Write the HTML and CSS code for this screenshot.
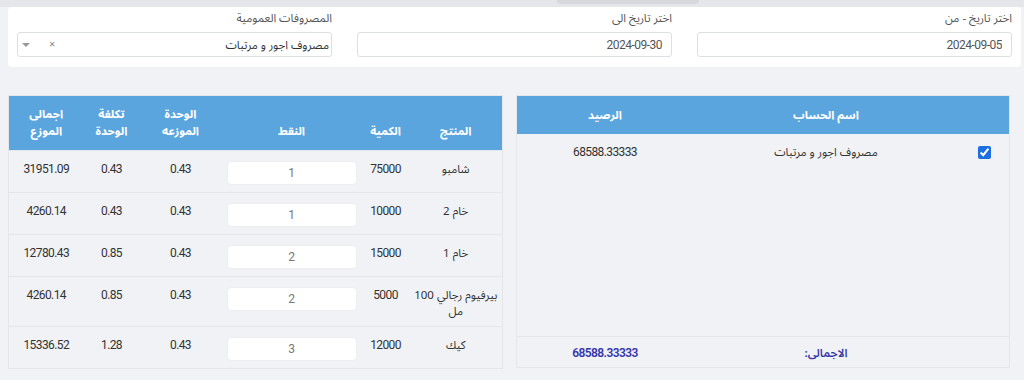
FILE: index.html
```html
<!DOCTYPE html>
<html dir="rtl" lang="ar">
<head>
  <meta charset="utf-8">
  <title>توزيع المصروفات</title>
  <link rel="stylesheet" href="styles.css">
</head>
<body>
  <div class="topbar"><span class="topbar-tab"></span></div>

  <div class="filter-card">
    <div class="field">
      <label>اختر تاريخ - من</label>
      <input type="text" class="text-input" value="2024-09-05">
    </div>
    <div class="field">
      <label>اختر تاريخ الى</label>
      <input type="text" class="text-input" value="2024-09-30">
    </div>
    <div class="field">
      <label>المصروفات العمومية</label>
      <div class="select-box">
        <span class="select-value">مصروف اجور و مرتبات</span>
        <span class="select-clear">×</span>
        <span class="select-arrow"></span>
      </div>
    </div>
  </div>

  <div class="tables">
    <!-- accounts -->
    <div class="accounts">
      <table class="grid-table">
        <colgroup><col class="c-check"><col class="c-name"><col></colgroup>
        <thead>
          <tr><th></th><th>اسم الحساب</th><th>الرصيد</th></tr>
        </thead>
        <tbody>
          <tr>
            <td><input type="checkbox" class="check" checked></td>
            <td>مصروف اجور و مرتبات</td>
            <td class="num">68588.33333</td>
          </tr>
        </tbody>
      </table>
      <div class="accounts-footer">
        <span class="footer-spacer"></span>
        <span class="footer-label">الاجمالى:</span>
        <span class="footer-value num">68588.33333</span>
      </div>
    </div>

    <!-- products -->
    <table class="grid-table products">
      <colgroup>
        <col style="width:93px"><col style="width:48px"><col style="width:140px">
        <col style="width:82px"><col style="width:56px"><col style="width:75px">
      </colgroup>
      <thead>
        <tr>
          <th>المنتج</th>
          <th>الكمية</th>
          <th>النقط</th>
          <th><span class="th-line">الوحدة</span><span class="th-line">الموزعه</span></th>
          <th><span class="th-line">تكلفة</span><span class="th-line">الوحدة</span></th>
          <th><span class="th-line">اجمالى</span><span class="th-line">الموزع</span></th>
        </tr>
      </thead>
      <tbody>
        <tr>
          <td>شامبو</td><td class="num">75000</td>
          <td><input type="text" class="points-input" value="1"></td>
          <td class="num">0.43</td><td class="num">0.43</td><td class="num">31951.09</td>
        </tr>
        <tr>
          <td>خام 2</td><td class="num">10000</td>
          <td><input type="text" class="points-input" value="1"></td>
          <td class="num">0.43</td><td class="num">0.43</td><td class="num">4260.14</td>
        </tr>
        <tr>
          <td>خام 1</td><td class="num">15000</td>
          <td><input type="text" class="points-input" value="2"></td>
          <td class="num">0.43</td><td class="num">0.85</td><td class="num">12780.43</td>
        </tr>
        <tr>
          <td>بيرفيوم رجالي 100 مل</td><td class="num">5000</td>
          <td><input type="text" class="points-input" value="2"></td>
          <td class="num">0.43</td><td class="num">0.85</td><td class="num">4260.14</td>
        </tr>
        <tr>
          <td>كيك</td><td class="num">12000</td>
          <td><input type="text" class="points-input" value="3"></td>
          <td class="num">0.43</td><td class="num">1.28</td><td class="num">15336.52</td>
        </tr>
      </tbody>
    </table>
  </div>
</body>
</html>
```

FILE: styles.css
```css
/* General */
body {
  margin: 0;
  padding: 0;
  background-color: #f0f2f5;
  color: #333333;
  font-family: "Noto Sans Arabic", "DejaVu Sans", sans-serif;
  font-size: 11.5px;
}

.num {
  font-family: "Roboto", sans-serif;
  font-size: 12px;
  letter-spacing: -0.6px;
}

/* Top strip */
.topbar {
  height: 7px;
  background-color: #e4e6e9;
  position: relative;
}

.topbar-tab {
  position: absolute;
  top: 0;
  left: 557px;
  width: 142px;
  height: 4px;
  background-color: #d6d8dc;
  border-radius: 0 0 4px 4px;
}

/* Filter card */
.filter-card {
  margin: 0 3px 0 8px;
  padding: 3px 9px 10px;
  background-color: #ffffff;
  border-radius: 4px;
  display: grid;
  grid-template-columns: repeat(3, 1fr);
  column-gap: 25px;
}

.field label {
  display: block;
  line-height: 16px;
  margin-bottom: 6px;
  color: #555555;
}

.text-input,
.select-box {
  width: 100%;
  height: 25px;
  box-sizing: border-box;
  border: 1px solid #dcdfe4;
  border-radius: 3px;
  background-color: #ffffff;
  color: #555555;
  font-family: "Roboto", sans-serif;
  font-size: 12px;
  letter-spacing: -0.5px;
  padding: 0 9px;
  text-align: right;
  outline: none;
}

.select-box {
  display: flex;
  align-items: center;
  padding: 0 2px 0 4px;
  font-family: "Noto Sans Arabic", "DejaVu Sans", sans-serif;
  font-size: 11.5px;
  letter-spacing: 0;
  color: #333333;
}

.select-value {
  flex: 1;
}

.select-clear {
  color: #888888;
  font-size: 11px;
  margin-left: 19px;
}

.select-arrow {
  width: 0;
  height: 0;
  border-left: 4px solid transparent;
  border-right: 4px solid transparent;
  border-top: 4px solid #999999;
}

/* Tables */
.tables {
  margin-top: 28px;
  padding: 0 14px 0 9px;
  display: grid;
  grid-template-columns: 494px 494px;
  column-gap: 13px;
  align-items: start;
}

.grid-table {
  width: 100%;
  border-collapse: collapse;
  table-layout: fixed;
}

.grid-table th {
  background-color: #5ba5df;
  color: #ffffff;
  font-weight: bold;
  line-height: 18px;
  padding: 10px 3px;
  text-align: center;
  vertical-align: bottom;
}

.products th {
  line-height: 17px;
  padding: 10px 3px;
}

.th-line {
  display: block;
}

.grid-table td {
  line-height: 16px;
  padding: 10px 3px 7px;
  text-align: center;
  vertical-align: top;
}

.products {
  border: 1px solid #e3e6ea;
}

.products tbody tr {
  border-top: 1px solid #e3e6ea;
}

.points-input {
  display: block;
  margin: 0 auto;
  width: 130px;
  height: 24px;
  box-sizing: border-box;
  border: 1px solid #eceef1;
  border-radius: 4px;
  background-color: #ffffff;
  color: #777777;
  text-align: center;
  font-family: "Roboto", sans-serif;
  font-size: 12px;
  outline: none;
}

/* Accounts panel */
.accounts {
  height: 273px;
  box-sizing: border-box;
  border: 1px solid #e3e6ea;
  display: flex;
  flex-direction: column;
}

.c-check {
  width: 50px;
}

.c-name {
  width: 266px;
}

.check {
  margin: 2px 0 0;
  width: 13px;
  height: 13px;
  accent-color: #1b6fe0;
}

.accounts-footer {
  margin-top: auto;
  border-top: 1px solid #e3e6ea;
  display: grid;
  grid-template-columns: 50px 266px 1fr;
  line-height: 16px;
  padding: 8px 0 6px;
  color: #3737a8;
  font-weight: 600;
  text-align: center;
}
```
